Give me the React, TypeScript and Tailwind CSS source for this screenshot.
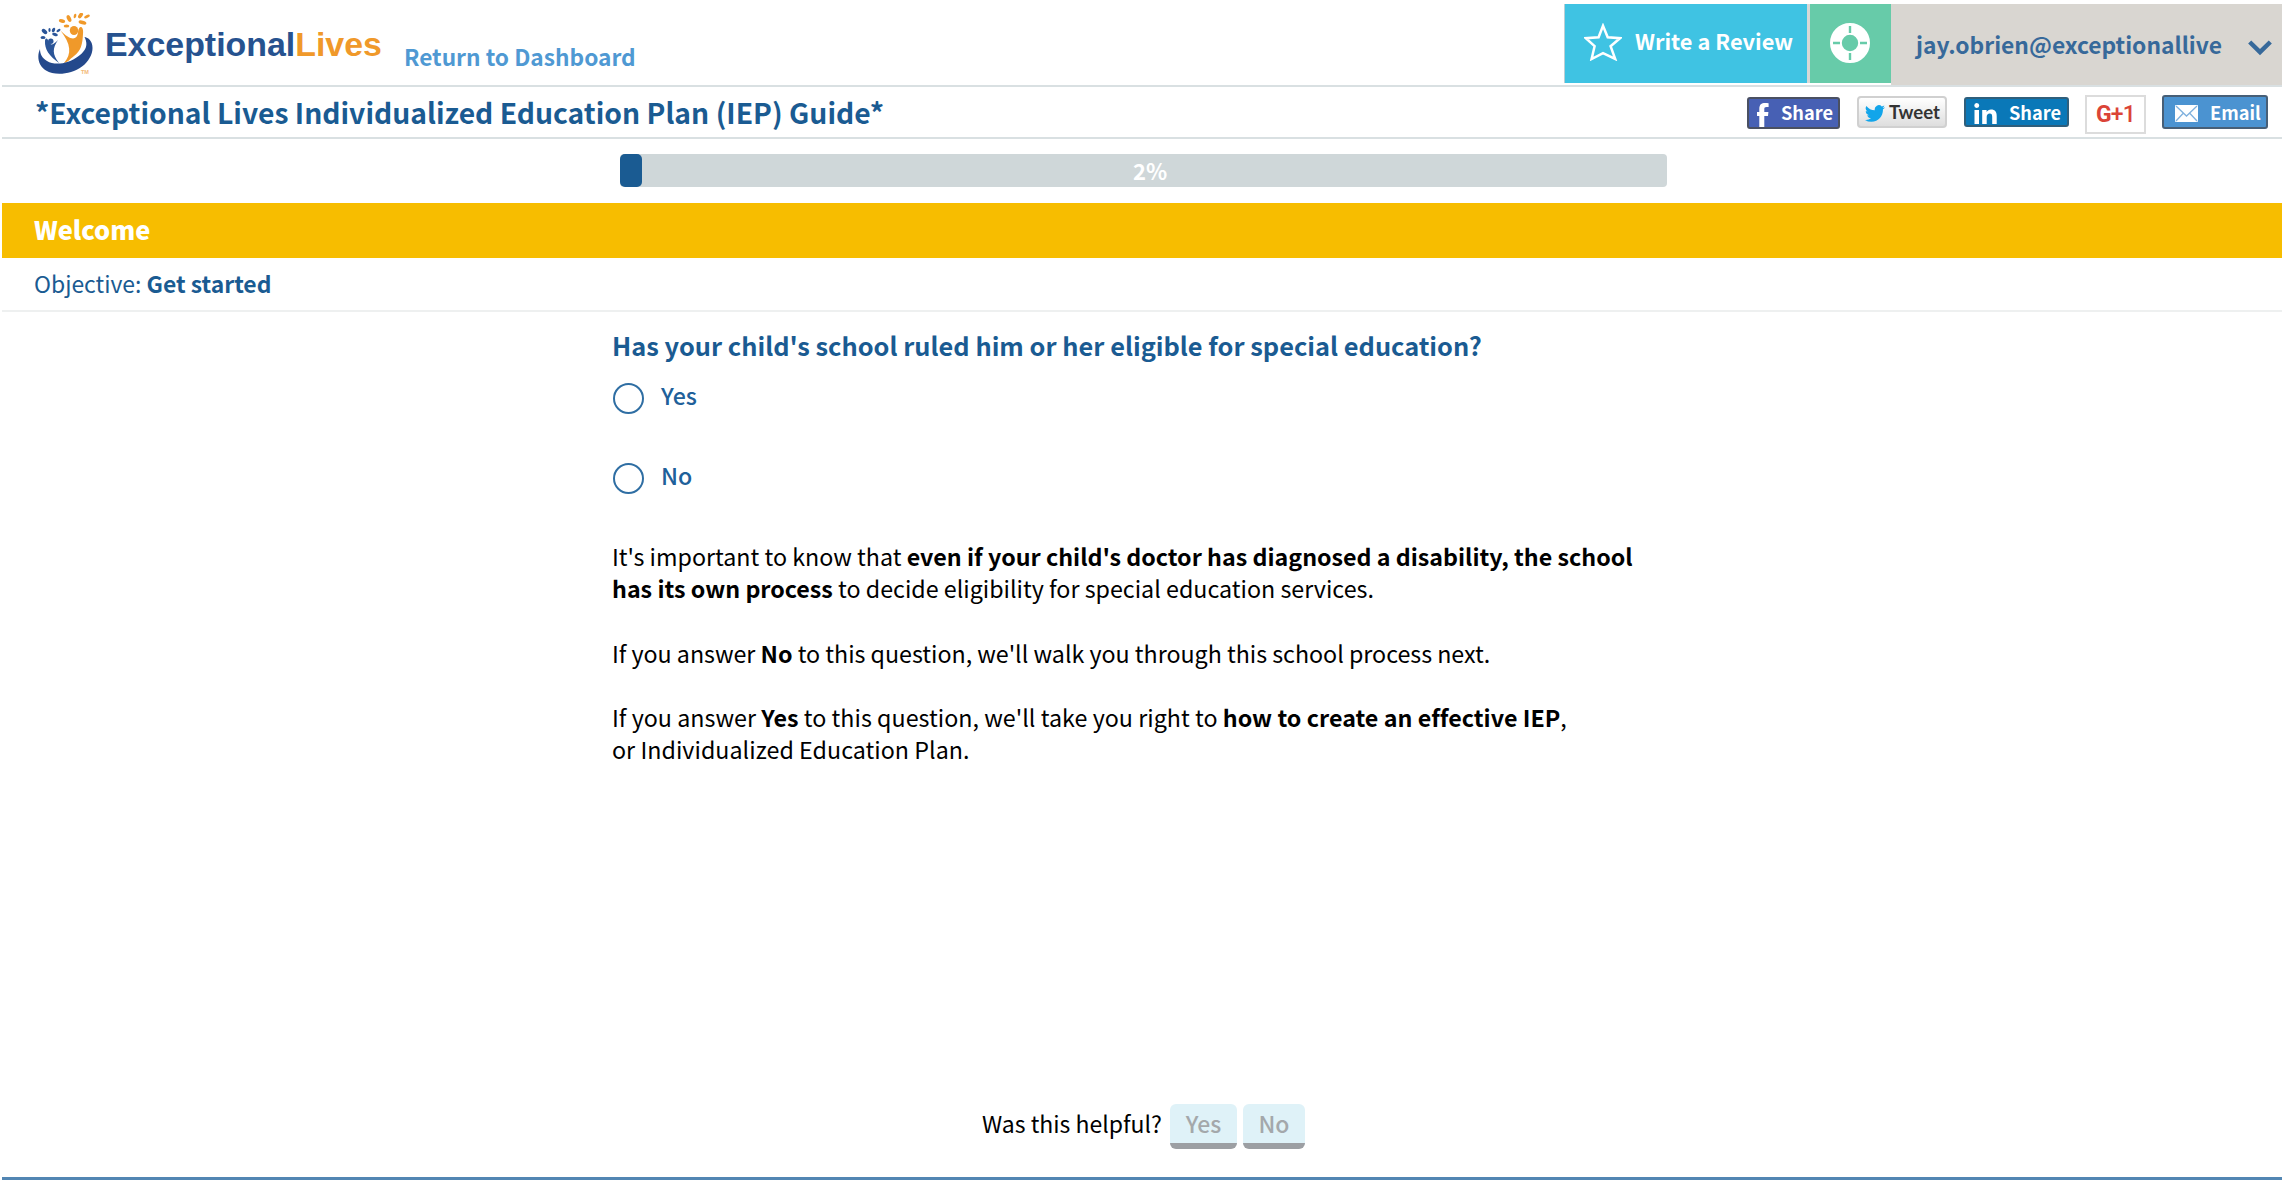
import type { ReactNode } from "react";

function Logo() {
  return (
    <svg className="h-[64px] w-[58px]" viewBox="0 0 58 64">
      <g fill="#f0992a">
        <path d="M26 50C34 41 33 31 22.500 17.500C31 26.500 39 29 40 19C41 11 46 13 45 21C44.500 31 43 38 36 43C32 46 29 50 26 50Z" />
        <ellipse cx="36" cy="17.500" rx="4.200" ry="4.500" />
        <ellipse cx="24" cy="8" rx="3.200" ry="1.800" transform="rotate(15 24 8)" />
        <ellipse cx="31" cy="5.500" rx="2" ry="3.600" transform="rotate(-25 31 5.500)" />
        <ellipse cx="37" cy="3" rx="1.300" ry="2.200" transform="rotate(15 37 3)" />
        <ellipse cx="42.500" cy="2.500" rx="1.900" ry="3.200" transform="rotate(35 42.500 2.500)" />
        <ellipse cx="49" cy="3.500" rx="3.100" ry="1.500" transform="rotate(-25 49 3.500)" />
        <ellipse cx="44.500" cy="9.500" rx="4" ry="1.900" transform="rotate(15 44.500 9.500)" />
        <ellipse cx="28.500" cy="13" rx="2.800" ry="1.600" />
      </g>
      <g fill="#2b5598">
        <path d="M21 50C11 43 6.500 36 7 28C7.500 24 9.500 25.500 10.500 28C13 34 16 31 20 27C14.500 35 14 41 21 50Z" />
        <circle cx="12.800" cy="28.300" r="2.700" />
        <ellipse cx="5" cy="24.500" rx="2.500" ry="1.500" />
        <ellipse cx="6.500" cy="18.500" rx="3.200" ry="1.900" transform="rotate(40 6.500 18.500)" />
        <ellipse cx="11.500" cy="17" rx="1.100" ry="2" />
        <ellipse cx="15.500" cy="17" rx="1.500" ry="2.400" transform="rotate(25 15.500 17)" />
        <ellipse cx="20.500" cy="17.500" rx="2.300" ry="1.200" transform="rotate(-35 20.500 17.500)" />
        <ellipse cx="17" cy="21.500" rx="2.900" ry="1.600" transform="rotate(15 17 21.500)" />
      </g>
      <path
        d="M2 36C-1.500 44 .5 53 8 57.500C17 63 33 61.500 44 53.500C54 46 58 33 51 26C49.500 24.500 48 24.500 46.500 24C50 31 49 37 40 43.500C31 50.500 17 53 9 48C4 45 2 41 2 36Z"
        fill="#24498c"
      />
      <text x="43" y="61" fontSize="5.500" fontFamily="Liberation Sans" fontWeight="700" fill="#f3b878">TM</text>
    </svg>
  );
}

function StarIcon() {
  return (
    <svg className="h-[38px] w-[38px]" viewBox="0 0 38 38" fill="none" stroke="#fff" strokeWidth="2.500">
      <path d="M19 2.800L23.700 14.300L36 15.200L26.600 23.200L31.200 36L19 30.200L7.600 36L10.600 23.200L1.800 15.200L14.600 14.300Z" />
    </svg>
  );
}

function RingIcon() {
  return (
    <svg className="size-[40px]" viewBox="0 0 40 40">
      <circle cx="20" cy="20" r="14.100" fill="none" stroke="#fff" strokeWidth="11.800" />
      <path d="M20 3v7M20 30v7M3 20h7M30 20h7" stroke="#67cba9" strokeWidth="2.400" />
    </svg>
  );
}

function Radio({ label }: { label: string }) {
  return (
    <label className="flex h-[32px] items-start text-[23.2px] leading-[32px] font-medium text-[#20609a]">
      <span className="mt-[4px] mr-[17px] ml-[1px] size-[31px] rounded-full border-[2.5px] border-[#2f6ea3]" />
      {label}
    </label>
  );
}

function HelpButton({ children, className }: { children: ReactNode; className: string }) {
  return (
    <button
      className={
        "mt-[-3px] h-[45px] rounded-[6px] border-b-[6px] border-[#9c9fa3] bg-[#dff2f8] text-center text-[23px] leading-[39px] font-medium text-[#a4a8ab] " +
        className
      }
    >
      {children}
    </button>
  );
}

export default function App() {
  return (
    <div className="flex h-[1180px] w-[2282px] flex-col overflow-hidden bg-white pl-[2px] font-['Noto_Sans_CJK_SC',sans-serif]">
      <header className="flex h-[87px] shrink-0 border-b-2 border-[#d9e0e2]">
        <div className="mt-[13px] ml-[36px]">
          <Logo />
        </div>
        <div className="mt-[25px] ml-[9px] w-[299px] font-['Liberation_Sans',sans-serif] text-[33.9px] leading-[39px] font-bold text-[#26528f]">
          Exceptional<span className="text-[#f0992a]">Lives</span>
        </div>
        <a className="mt-[41px] text-[22.7px] leading-[32px] font-bold text-[#4f99d3]">Return to Dashboard</a>
        <div className="mt-[4px] ml-auto flex h-[81px] w-[718px]">
          <div className="flex h-[79px] w-[243px] border-l border-[#b9cfd5] bg-[#3fc3e3] pl-[19px]">
            <div className="mt-[19px] w-[51px]">
              <StarIcon />
            </div>
            <span className="mt-[21px] text-[21.8px] leading-[32px] font-bold whitespace-nowrap text-white">Write a Review</span>
          </div>
          <div className="h-[79px] w-[3px] bg-[#d8d8d6]" />
          <div className="h-[79px] w-[81px] bg-[#67cba9] pt-[19px] pl-[20px]">
            <RingIcon />
          </div>
          <div className="flex grow bg-[#d9d6d1] pl-[25px] text-[#37699a]">
            <span className="mt-[25px] w-[332px] text-[22.8px] leading-[32px] font-bold">jay.obrien@exceptionallive</span>
            <svg className="mt-[36px] h-[16px] w-[24px]" viewBox="0 0 24 16" fill="none" stroke="currentColor" strokeWidth="4.500">
              <path d="M1.700 2L12 12L22.300 2" />
            </svg>
          </div>
        </div>
      </header>

      <div className="flex h-[52px] shrink-0 border-b-2 border-[#d9e0e2] pr-[14px]">
        <h1 className="mt-[5px] ml-[33px] text-[28.3px] leading-[40px] font-bold whitespace-nowrap text-[#1a5b92]">
          *Exceptional Lives Individualized Education Plan (IEP) Guide*
        </h1>
        <div className="ml-auto flex items-start text-[18.2px] leading-[26px] font-bold text-white">
          <div className="mt-[10px] flex h-[32px] w-[93px] rounded-[3px] border-2 border-[#4a5062] bg-[#4760b4]">
            <svg className="mt-[4px] ml-[8px] h-[24px] w-[12px]" viewBox="0 0 12 24" fill="#fff">
              <path d="M2.300 24V13H0V9H2.300V6C2.300 1.500 4.500 0 8 0C9.500 0 10.500 .1 11.600 .3V4H9.500C7.700 4 7.300 4.700 7.300 6.200V9H11.400L11 13H7.300V24Z" />
            </svg>
            <span className="ml-[12px]">Share</span>
          </div>
          <div className="mt-[9px] ml-[17px] flex h-[32px] w-[90px] rounded-[4px] border-2 border-[#d0d0d0] bg-gradient-to-b from-white to-[#dedede] text-[#333]">
            <svg className="mt-[7px] ml-[6px] h-[17px] w-[20px]" viewBox="0 2 24 20" preserveAspectRatio="none" fill="#12a5ea">
              <path d="M23.950 4.570a10 10 0 0 1-2.820.78 4.960 4.960 0 0 0 2.160-2.730 9.900 9.900 0 0 1-3.130 1.190 4.920 4.920 0 0 0-8.380 4.480A13.930 13.930 0 0 1 1.640 3.160a4.920 4.920 0 0 0 1.520 6.570 4.900 4.900 0 0 1-2.230-.61v.06a4.920 4.920 0 0 0 3.950 4.830 5 5 0 0 1-2.210.08 4.930 4.930 0 0 0 4.600 3.420A9.870 9.870 0 0 1 0 19.540a13.990 13.990 0 0 0 7.550 2.210c9.050 0 14-7.500 14-13.980 0-.21 0-.42-.02-.63a9.940 9.940 0 0 0 2.420-2.570Z" />
            </svg>
            <span className="mt-px ml-[4px] font-['Lato',sans-serif] text-[18.6px]">Tweet</span>
          </div>
          <div className="mt-[10px] ml-[17px] flex h-[30px] w-[105px] rounded-[3px] border-2 border-[#2f5f7c] bg-[#0a78b8]">
            <svg className="mt-[4px] ml-[8px] h-[21px] w-[23px]" viewBox="0 0 23 21" fill="#fff">
              <path d="M.5 7H5V21H.5ZM2.800 0A2.500 2.500 0 1 1 2.700 5A2.500 2.500 0 0 1 2.800 0ZM8.200 7H12.600V9C13.500 7.500 15 6.600 17 6.600C21.200 6.600 22.700 9.200 22.700 13V21H18.200V13.800C18.200 11.700 17.600 10.500 15.800 10.500C13.700 10.500 12.700 11.900 12.700 14V21H8.200Z" />
            </svg>
            <span className="ml-[12px]">Share</span>
          </div>
          <div className="mt-[8px] ml-[16px] flex h-[39px] w-[61px] justify-center border-2 border-[#dcdcdc] bg-white font-['Roboto',sans-serif] text-[23px] leading-[35px] tracking-[-0.8px] text-[#db4437]">
            G<span className="font-medium">+1</span>
          </div>
          <div className="mt-[8px] ml-[16px] flex h-[34px] w-[106px] rounded-[3px] border-2 border-[#475f77] bg-[#4b93d1]">
            <svg className="mt-[8px] ml-[11px] h-[17px] w-[23px]" viewBox="0 0 23 17">
              <rect width="23" height="17" rx="1" fill="#fff" />
              <path d="M1 1L11.500 11L22 1M1 16L8 8.500M22 16L15 8.500" fill="none" stroke="#7fb1de" strokeWidth="1.300" />
            </svg>
            <span className="mt-[2px] ml-[12px]">Email</span>
          </div>
        </div>
      </div>

      <div className="h-[64px] shrink-0 pt-[15px] pl-[618px]">
        <div className="relative flex h-[33px] w-[1047px] items-center justify-center rounded-[4px] bg-[#cfd7d9]">
          <div className="absolute top-0 left-0 h-full w-[22px] rounded-[5px] bg-[#1a5b92]" />
          <span className="pl-[13px] text-[22px] leading-[33px] font-bold text-white">2%</span>
        </div>
      </div>

      <div className="h-[55px] shrink-0 bg-[#f7bd00] pt-[10px] pl-[32px] text-[25.4px] leading-[32px] font-black text-white">
        Welcome
      </div>
      <div className="h-[54px] shrink-0 border-b-2 border-[#eef0f0] pt-[9px] pl-[32px] text-[22.9px] leading-[32px] whitespace-pre text-[#1a5b92]">
        Objective: <b>Get started</b>
      </div>

      <main className="ml-[610px] flex grow flex-col">
        <h2 className="mt-[17px] text-[25.4px] leading-[32px] font-bold text-[#1a5b92]">
          Has your child's school ruled him or her eligible for special education?
        </h2>
        <div className="mt-[18px] flex flex-col gap-[48px]">
          <Radio label="Yes" />
          <Radio label="No" />
        </div>
        <div className="mt-[49px] flex flex-col gap-[32.2px] text-[23.25px] leading-[32.2px] whitespace-nowrap text-black">
          <p>
            It's important to know that <b>even if your child's doctor has diagnosed a disability, the school</b>
            <br />
            <b>has its own process</b> to decide eligibility for special education services.
          </p>
          <p className="tracking-[-0.02px]">
            If you answer <b>No</b> to this question, we'll walk you through this school process next.
          </p>
          <p className="tracking-[0.03px]">
            If you answer <b>Yes</b> to this question, we'll take you right to <b>how to create an effective IEP</b>,
            <br />
            or Individualized Education Plan.
          </p>
        </div>
      </main>

      <footer className="flex h-[73px] shrink-0 items-start border-b-[3px] border-[#5286b3] pl-[980px]">
        <span className="w-[188px] text-[23px] leading-[32px] text-black">Was this helpful?</span>
        <HelpButton className="w-[67px]">Yes</HelpButton>
        <HelpButton className="ml-[6px] w-[62px]">No</HelpButton>
      </footer>
    </div>
  );
}
